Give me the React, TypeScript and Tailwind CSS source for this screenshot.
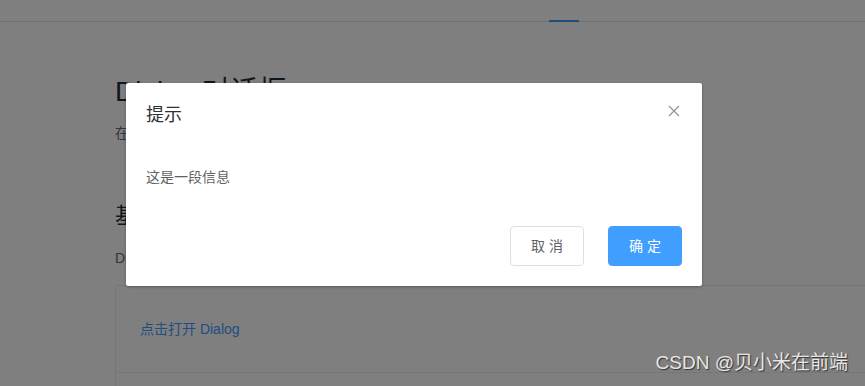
import React from "react";

const font = { fontFamily: '"Liberation Sans", "Noto Sans CJK SC", sans-serif' };

export default function App() {
  return (
    <div className="relative w-[865px] h-[386px] overflow-hidden bg-white" style={font}>
      {/* page */}
      <div className="h-[22px] border-b border-[#dcdfe6] flex">
        <div className="ml-[549px] w-[30px] h-[22px] border-b-2 border-[#409eff]" />
      </div>
      <div className="pl-[115px] pt-[54px]">
        <h1 className="text-[28px] leading-[32px] text-[#1f2f3d] font-normal">Dialog 对话框</h1>
        <p className="mt-[15px] text-[14px] leading-[20px] text-[#5e6d82]">在保留当前页面状态的情况下，告知用户并承载相关操作。</p>
        <h2 className="mt-[59px] text-[22px] leading-[28px] text-[#1f2f3d] font-normal">基础用法</h2>
        <p className="mt-[18px] text-[14px] leading-[20px] text-[#5e6d82]">Dialog 弹出一个对话框，适合需要定制性更强的场景。</p>
        <div className="mt-[17px] border border-[#ebebeb] rounded-[3px] w-[800px]">
          <div className="h-[86px] px-[24px] flex items-center">
            <span className="text-[14px] text-[#409eff]">点击打开 Dialog</span>
          </div>
          <div className="border-t border-[#eaeefb] h-[40px]" />
        </div>
      </div>

      {/* overlay */}
      <div className="absolute inset-0 bg-black/50" />

      {/* dialog */}
      <div className="absolute left-[126px] top-[83px] w-[576px] bg-white rounded-[2px] shadow-[0_1px_3px_rgba(0,0,0,0.3)]">
        <div className="relative pt-[20px] px-[20px] pb-[10px]">
          <span className="text-[18px] leading-[24px] text-[#303133]">提示</span>
          <button className="absolute top-[20px] right-[20px] w-[16px] h-[16px] flex items-center justify-center">
            <svg width="12" height="12" viewBox="0 0 12 12">
              <path d="M1 1L11 11M11 1L1 11" stroke="#909399" strokeWidth="1.2" />
            </svg>
          </button>
        </div>
        <div className="py-[30px] px-[20px] text-[14px] leading-[18px] text-[#606266]">这是一段信息</div>
        <div className="pt-[10px] px-[20px] pb-[20px] flex justify-end gap-[24px]">
          <button className="w-[74px] h-[40px] border border-[#dcdfe6] rounded-[4px] text-[14px] text-[#606266] bg-white">取 消</button>
          <button className="w-[74px] h-[40px] border border-[#409eff] rounded-[4px] text-[14px] text-white bg-[#409eff]">确 定</button>
        </div>
      </div>

      {/* watermark */}
      <div className="absolute right-[17px] top-[351px] text-[19px] leading-[24px] text-[#e6e6e6] [text-shadow:1px_1px_1px_rgba(0,0,0,0.6)]">
        CSDN @贝小米在前端
      </div>
    </div>
  );
}
